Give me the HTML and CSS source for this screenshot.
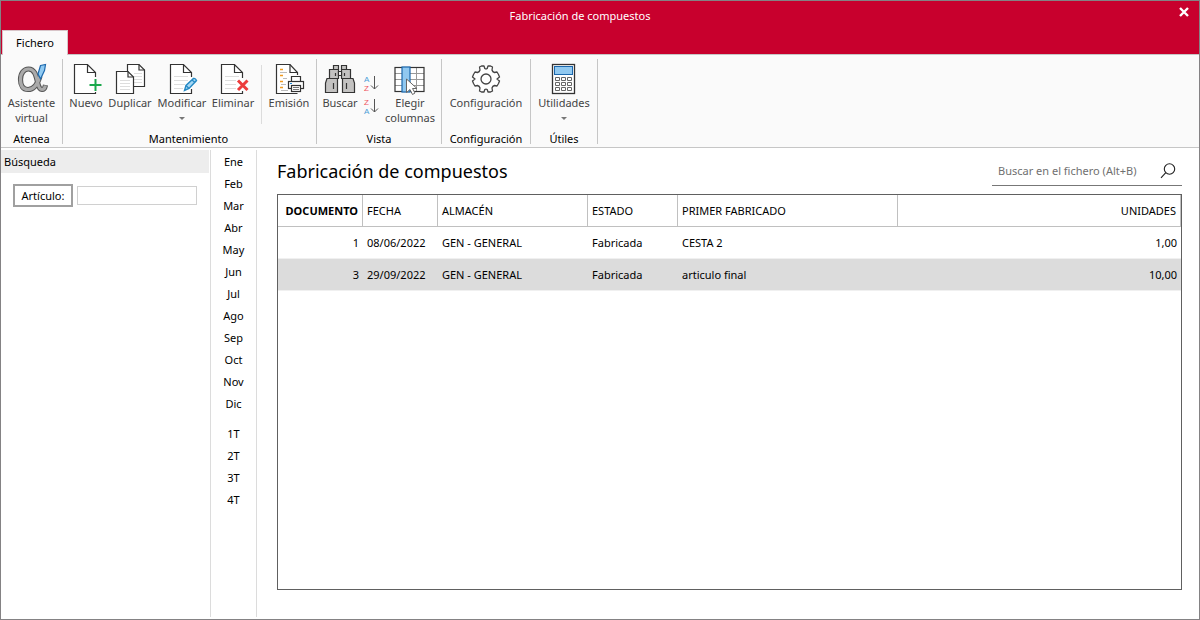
FILE: index.html
```html
<!DOCTYPE html>
<html lang="es">
<head>
<meta charset="utf-8">
<title>Fabricación de compuestos</title>
<link rel="stylesheet" href="styles.css">
</head>
<body>
<div class="window">
  <header class="titlebar">
    <span class="window-title">Fabricación de compuestos</span>
    <button class="close" type="button" aria-label="Cerrar">
      <svg width="10" height="10" viewBox="0 0 10 10"><path d="M1 1L9 9M9 1L1 9" stroke="#fff" stroke-width="2.4"/></svg>
    </button>
    <nav class="tabs"><button class="tab" type="button">Fichero</button></nav>
  </header>

  <div class="ribbon">
    <section class="group">
      <div class="tools">
        <button class="tool w55" type="button">
          <svg class="icon" viewBox="0 0 32 32" fill="none">
            <path d="M24 13C22 20 18 26.500 12 26.500C7 26.500 4.500 22.500 4.500 16.500C4.500 10 8 6 12.500 6C18.500 6 20 12 21.500 19C22.500 24 24 26.500 26 26.500C28 26.500 29 25 29.500 22" stroke="#555" stroke-width="5.200"/>
            <path d="M24 13.500C22 20 18 26.500 12 26.500C7 26.500 4.500 22.500 4.500 16.500C4.500 10 8 6 12.500 6C18.500 6 20 12 21.500 19C22.500 24 24 26.500 26 26.500C28 26.500 29 25 29.300 22.500" stroke="#aaa" stroke-width="3.200"/>
            <path d="M24.500 2.500L29.500 1.500L28.500 7.500L24.500 16L22 11Z" fill="#90caf2" stroke="#1c68ad" stroke-width="1.200"/>
          </svg>
          <span>Asistente<br>virtual</span>
        </button>
      </div>
      <h2 class="group-name">Atenea</h2>
    </section>

    <section class="group group-wide">
      <div class="tools">
        <button class="tool w40" type="button">
          <svg class="icon" viewBox="0 0 32 32" fill="none">
            <path d="M25.500 17V9.500L17.500 1.500H4.500V30.500H25.500V28" fill="#fff"/>
            <path d="M25.500 14V9.500L17.500 1.500H4.500V30.500H25.500V29M17.500 1.500V9.500H25.500" stroke="#333" stroke-width="1.200"/>
            <path d="M25.500 16V28M19.500 22H31.500" stroke="#1aa84b" stroke-width="2"/>
          </svg>
          <span>Nuevo</span>
        </button>
        <button class="tool w48" type="button">
          <svg class="icon" viewBox="0 0 32 32" fill="none" stroke="#333" stroke-width="1.200">
            <path d="M13.500 1.500H25L30.500 7V23.500H13.500Z" fill="#fff"/><path d="M25 1.500V7H30.500"/>
            <path d="M20 10.500H28M20 13.500H28M20 16.500H28M20 19.500H28" stroke="#ddd" stroke-width="1"/>
            <path d="M2.500 8.500H14L19.500 14V30.500H2.500Z" fill="#fff"/><path d="M14 8.500V14H19.500"/>
            <path d="M6 17.500H16M6 20.500H16M6 23.500H16M6 26.500H16" stroke="#ddd" stroke-width="1"/>
          </svg>
          <span>Duplicar</span>
        </button>
        <button class="tool w56" type="button">
          <svg class="icon" viewBox="0 0 32 32" fill="none">
            <path d="M25.500 14V9.500L17.500 1.500H4.500V30.500H25.500V26" fill="#fff"/>
            <path d="M25.500 14V9.500L17.500 1.500H4.500V30.500H25.500V26M17.500 1.500V9.500H25.500" stroke="#333" stroke-width="1.200"/>
            <path d="M8 13.500H22M8 17.500H22M8 21.500H19M8 25.500H17" stroke="#ddd"/>
            <path d="M18.500 27.500L20 22.500L27.500 15.500Q29.500 15 30.500 17.500L23 25.500Z" fill="#a6d8f5" stroke="#2589c4" stroke-width="1.400"/><path d="M20 22.500L23 25.500M26 17L29 19.500" stroke="#2589c4" stroke-width="1.200"/>
          </svg>
          <span>Modificar</span><i class="arrow"></i>
        </button>
        <button class="tool w46" type="button">
          <svg class="icon" viewBox="0 0 32 32" fill="none">
            <path d="M25.500 15V9.500L17.500 1.500H4.500V30.500H25.500V28" fill="#fff"/>
            <path d="M25.500 15V9.500L17.500 1.500H4.500V30.500H25.500V28M17.500 1.500V9.500H25.500" stroke="#333" stroke-width="1.200"/>
            <path d="M8 13.500H22M8 17.500H19M8 21.500H19M8 25.500H19" stroke="#ddd"/>
            <path d="M21 17.500L30.500 27M30.500 17.500L21 27" stroke="#ec3b3b" stroke-width="3"/>
          </svg>
          <span>Eliminar</span>
        </button>
        <span class="divider"></span>
        <button class="tool w44" type="button">
          <svg class="icon" viewBox="0 0 32 32" fill="none">
            <path d="M24.500 12V9.500L17 1.500H3.500V30.500H24.500" fill="#fff" stroke="#333" stroke-width="1.200"/>
            <path d="M17 1.500V9.500H24.500" stroke="#333" stroke-width="1.200"/>
            <path d="M7 6.500H10M7 12.500H10M7 18.500H10M7 24.500H10" stroke="#f09a20" stroke-width="1.600"/>
            <path d="M7 9.500H14M10 15.500H14M8 21.500H13M8 27.500H15" stroke="#bbb"/>
            <path d="M18.500 19V13.500H27.500V19" fill="#fff" stroke="#333" stroke-width="1.200"/>
            <rect x="15.500" y="18.500" width="15" height="7" fill="#fff" stroke="#333" stroke-width="1.200"/>
            <rect x="18.500" y="22.500" width="9" height="6" fill="#fff" stroke="#333" stroke-width="1.200"/>
            <path d="M17 20.500H19" stroke="#1e88d8" stroke-width="1.200"/><path d="M20 24.500H26M20 26.500H26" stroke="#777"/>
          </svg>
          <span>Emisión</span>
        </button>
      </div>
      <h2 class="group-name">Mantenimiento</h2>
    </section>

    <section class="group">
      <div class="tools">
        <button class="tool w40" type="button">
          <svg class="icon" viewBox="0 0 32 32" fill="#c3c2c1" stroke="#333" stroke-width="1.200">
            <path d="M9.500 2.500H14.500V6.500H9.500ZM17.500 2.500H22.500V6.500H17.500Z"/>
            <path d="M5.500 6.500H14.500V15.500H5.500ZM17.500 6.500H26.500V15.500H17.500Z"/>
            <path d="M14.500 8.500H17.500V12.500H14.500Z" fill="#fff"/>
            <path d="M3 15.500H13.500V29.500H1.500V20ZM18.500 15.500H29L30.500 20V29.500H18.500Z"/>
            <path d="M11.500 10V13M20.500 10V13M9.500 20V26M22.500 20V26"/>
          </svg>
          <span>Buscar</span>
        </button>
        <div class="sorts">
          <button class="sort" type="button" aria-label="Orden ascendente">
            <svg width="16" height="18" viewBox="0 0 16 18"><text class="letter" x="1" y="8" fill="#4aa0d8">A</text><text class="letter" x="1" y="17" fill="#ef5560">Z</text><path d="M11.500 2V15M8 11.500L11.500 15L15 11.500" fill="none" stroke="#555"/></svg>
          </button>
          <button class="sort" type="button" aria-label="Orden descendente">
            <svg width="16" height="18" viewBox="0 0 16 18"><text class="letter" x="1" y="8" fill="#ef5560">Z</text><text class="letter" x="1" y="17" fill="#4aa0d8">A</text><path d="M11.500 2V15M8 11.500L11.500 15L15 11.500" fill="none" stroke="#555"/></svg>
          </button>
        </div>
        <button class="tool w56" type="button">
          <svg class="icon" viewBox="0 0 32 32" fill="none">
            <rect x="1" y="4.500" width="29" height="24" fill="#fff"/>
            <path d="M1 10.500H30M1 16.500H30M1 22.500H30M22.500 5V28" stroke="#999"/>
            <rect x="1" y="4.500" width="29" height="24" stroke="#333" stroke-width="1.200"/>
            <rect x="8" y="4" width="8" height="25" fill="#90c8f0" stroke="#1c68ad" stroke-width="1.200"/>
            <path d="M12.500 16V29.500L16 26.500L18.500 31.500L21 30L18.500 25.500H23Z" fill="#fff" stroke="#666"/>
          </svg>
          <span>Elegir<br>columnas</span>
        </button>
      </div>
      <h2 class="group-name">Vista</h2>
    </section>

    <section class="group">
      <div class="tools">
        <button class="tool w82" type="button">
          <svg class="icon" viewBox="0 0 32 32" fill="#fff" stroke="#444" stroke-width="1.300" stroke-linejoin="round">
            <path d="M11.500 3L14 3L14.800 5.500Q16 6.300 17.200 5.500L18 3L20.500 3L22.500 4L22 7Q22.500 9 24.500 9.500L27 9L28.500 11.500L29.500 14L27 16L29.500 18L28.500 20.500L27 23L24.500 22.500Q22.500 23 22 25L22.500 28L20.500 29L18 29L17.200 26.500Q16 25.700 14.800 26.500L14 29L11.500 29L9.500 28L10 25Q9.500 23 7.500 22.500L5 23L3.500 20.500L2.500 18L5 16L2.500 14L3.500 11.500L5 9L7.500 9.500Q9.500 9 10 7L9.500 4Z"/>
            <circle cx="16" cy="16" r="5"/>
          </svg>
          <span>Configuración</span>
        </button>
      </div>
      <h2 class="group-name">Configuración</h2>
    </section>

    <section class="group">
      <div class="tools">
        <button class="tool w60" type="button">
          <svg class="icon" viewBox="0 0 32 32" fill="#fff">
            <rect x="4.500" y="1.500" width="22" height="29" stroke="#333" stroke-width="1.300"/>
            <rect x="6.500" y="3.500" width="18" height="8" fill="#91c9f0" stroke="#1c68ad"/>
            <g stroke="#666"><path d="M7.500 14.500h4v3h-4zM13.500 14.500h4v3h-4zM19.500 14.500h4v3h-4zM7.500 19.500h4v3h-4zM13.500 19.500h4v3h-4zM19.500 19.500h4v3h-4zM7.500 24.500h4v3h-4zM13.500 24.500h4v3h-4zM19.500 24.500h4v3h-4z"/></g>
          </svg>
          <span>Utilidades</span><i class="arrow"></i>
        </button>
      </div>
      <h2 class="group-name">Útiles</h2>
    </section>
  </div>

  <div class="workspace">
    <aside class="search-panel">
      <h2 class="panel-title">Búsqueda</h2>
      <div class="field">
        <button class="field-button" type="button" id="articulo-label">Artículo:</button>
        <input class="field-input" type="text" aria-labelledby="articulo-label">
      </div>
    </aside>

    <nav class="periods">
      <button type="button">Ene</button><button type="button">Feb</button><button type="button">Mar</button><button type="button">Abr</button><button type="button">May</button><button type="button">Jun</button><button type="button">Jul</button><button type="button">Ago</button><button type="button">Sep</button><button type="button">Oct</button><button type="button">Nov</button><button type="button">Dic</button>
      <button class="quarter-first" type="button">1T</button><button type="button">2T</button><button type="button">3T</button><button type="button">4T</button>
    </nav>

    <main class="content">
      <div class="content-head">
        <h1 class="page-title">Fabricación de compuestos</h1>
        <div class="file-search">
          <input type="text" placeholder="Buscar en el fichero (Alt+B)" aria-label="Buscar en el fichero">
          <svg width="16" height="16" viewBox="0 0 16 16" fill="none" stroke="#222" stroke-width="1.100"><circle cx="9.500" cy="6" r="5.200"/><path d="M5.800 9.700L1 14.800"/></svg>
        </div>
      </div>
      <div class="grid">
        <table>
          <colgroup><col class="c-doc"><col class="c-date"><col class="c-store"><col class="c-state"><col class="c-first"><col></colgroup>
          <thead>
            <tr><th class="num sorted">DOCUMENTO</th><th>FECHA</th><th>ALMACÉN</th><th>ESTADO</th><th>PRIMER FABRICADO</th><th class="num">UNIDADES</th></tr>
          </thead>
          <tbody>
            <tr><td class="num">1</td><td>08/06/2022</td><td>GEN - GENERAL</td><td>Fabricada</td><td>CESTA 2</td><td class="num">1,00</td></tr>
            <tr class="selected"><td class="num">3</td><td>29/09/2022</td><td>GEN - GENERAL</td><td>Fabricada</td><td>articulo final</td><td class="num">10,00</td></tr>
          </tbody>
        </table>
      </div>
    </main>
  </div>
</div>
</body>
</html>
```
FILE: styles.css
```css
* { box-sizing: border-box; }

body {
  margin: 0;
  font: 11px/16px "Noto Sans", "Open Sans", sans-serif;
  color: #000;
}

button, input { font: inherit; color: inherit; }
button { background: none; border: 0; padding: 0; }
h1, h2 { margin: 0; font-weight: 400; }

.window {
  min-height: 100vh;
  display: flex;
  flex-direction: column;
  border: 1px solid #848284;
  background: #fff;
}

/* Title bar and tabs */
.titlebar {
  display: grid;
  grid-template-columns: 1fr auto 1fr;
  grid-template-rows: 29px 24px;
  background: #c8002d;
  color: #fff;
}
.window-title { grid-column: 2; padding-top: 7px; padding-right: 40px; }
.close { justify-self: end; align-self: start; width: 10px; height: 10px; margin: 6px 10px 0 0; }
.close svg { display: block; }
.tabs { grid-column: 1 / -1; display: flex; padding-left: 1px; }
.tab {
  width: 66px;
  margin-bottom: -1px;
  background: #fafafa;
  color: #000;
  border: 1px solid #d8c4c8;
  border-bottom: 0;
  z-index: 1;
}

/* Ribbon */
.ribbon {
  display: flex;
  padding: 4px 0 3px;
  background: #fafafa;
  border-top: 1px solid #c6c6c6;
  border-bottom: 1px solid #c6c6c6;
}
.group {
  display: flex;
  flex-direction: column;
  height: 85px;
  padding: 4px 3px 0;
  border-right: 1px solid #c6c6c6;
}
.group-wide { padding-right: 5px; }
.tools { display: flex; flex: 1; }
.group-name { font-size: 11px; line-height: 10px; text-align: center; }
.tool {
  display: flex;
  flex-direction: column;
  align-items: center;
  color: #444;
  line-height: 15px;
  white-space: nowrap;
}
.icon { display: block; width: 32px; height: 32px; }
.w40 { width: 40px; }
.w44 { width: 44px; }
.w46 { width: 46px; }
.w48 { width: 48px; }
.w55 { width: 55px; }
.w56 { width: 56px; }
.w60 { width: 60px; }
.w82 { width: 82px; }
.arrow {
  margin-top: 7px;
  border: 3px solid transparent;
  border-top-color: #777;
  border-bottom: 0;
}
.divider { width: 1px; height: 59px; margin: 2px 5px 0; background: #dcdcdc; }
.sorts { display: flex; flex-direction: column; gap: 5px; width: 22px; padding: 11px 0 0 3px; }
.sort { width: 16px; height: 18px; }
.sort svg { display: block; }
.letter { font: 8px "Liberation Sans", sans-serif; }

/* Work area */
.workspace { flex: 1; display: flex; padding: 2px 0; }

.search-panel { width: 210px; padding-right: 1px; border-right: 1px solid #dcdcdc; }
.panel-title { padding: 4px 3px 3px; background: #ededed; font-size: 11px; line-height: 16px; }
.field { display: flex; align-items: center; gap: 4px; padding: 11px 12px; }
.field-button { width: 60px; height: 23px; border: 2px solid #a0a0a0; }
.field-input { flex: 1; min-width: 0; height: 19px; border: 1px solid #d0d0d0; padding: 0 4px; }

.periods {
  display: flex;
  flex-direction: column;
  width: 46px;
  padding-top: 1px;
  border-right: 1px solid #dcdcdc;
}
.periods button { height: 22px; }
.periods .quarter-first { margin-top: 8px; }

.content {
  flex: 1;
  display: flex;
  flex-direction: column;
  padding: 6px 17px 27px 20px;
}
.content-head { display: flex; justify-content: space-between; align-items: flex-start; height: 38px; }
.page-title { font-size: 18px; line-height: 30px; }
.file-search {
  display: flex;
  align-items: center;
  width: 190px;
  height: 30px;
  padding: 0 6px;
  border-bottom: 1px solid #777;
}
.file-search input { flex: 1; min-width: 0; border: 0; padding: 0; outline: 0; background: none; }
.file-search input::placeholder { color: #707070; opacity: 1; }

.grid { flex: 1; border: 1px solid #606060; }
table { width: 100%; table-layout: fixed; border-collapse: separate; border-spacing: 0; }
.c-doc { width: 85px; }
.c-date { width: 75px; }
.c-store { width: 150px; }
.c-state { width: 90px; }
.c-first { width: 220px; }
th, td { height: 32px; padding: 0 4px; text-align: left; font-weight: 400; white-space: nowrap; }
th { border-right: 1px solid #c0c0c0; border-bottom: 1px solid #c0c0c0; }
td { border-bottom: 1px solid #f0f0f0; }
.num { text-align: right; }
.sorted { font-weight: 700; }
.selected { background: #dcdcdc; }
```
